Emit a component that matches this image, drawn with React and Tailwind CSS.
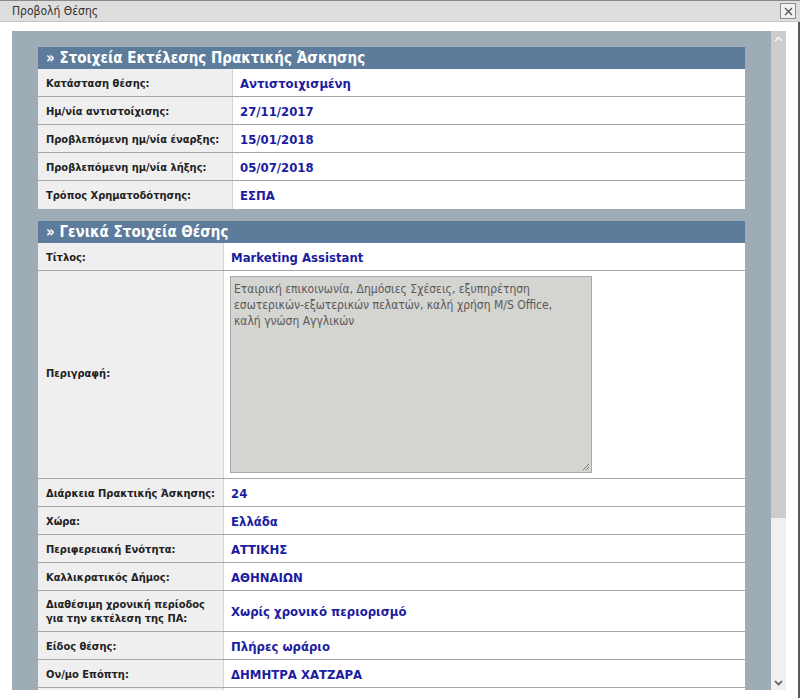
import React from 'react';

const FONT = "font-['DejaVu_Sans_Condensed','DejaVu_Sans',Tahoma,sans-serif]";

const firstRows = [
  ['Κατάσταση θέσης:', 'Αντιστοιχισμένη'],
  ['Ημ/νία αντιστοίχισης:', '27/11/2017'],
  ['Προβλεπόμενη ημ/νία έναρξης:', '15/01/2018'],
  ['Προβλεπόμενη ημ/νία λήξης:', '05/07/2018'],
  ['Τρόπος Χρηματοδότησης:', 'ΕΣΠΑ'],
];

const secondRows = [
  ['Διάρκεια Πρακτικής Άσκησης:', '24'],
  ['Χώρα:', 'Ελλάδα'],
  ['Περιφερειακή Ενότητα:', 'ΑΤΤΙΚΗΣ'],
  ['Καλλικρατικός Δήμος:', 'ΑΘΗΝΑΙΩΝ'],
];

const thirdRows = [
  ['Είδος θέσης:', 'Πλήρες ωράριο'],
  ['Ον/μο Επόπτη:', 'ΔΗΜΗΤΡΑ ΧΑΤΖΑΡΑ'],
  ['', ''],
];

const SectionHeader = ({ children }) => (
  <div className="h-[22px] bg-[#5d7b9b] flex items-center pl-[8px] text-white font-bold text-[15px] leading-none">
    » {children}
  </div>
);

const Row = ({ label, value, labelWidth, height = 'h-[28px]', last = false, children }) => (
  <div className={`flex ${height} bg-white ${last ? '' : 'border-b border-[#a8a8a8]'}`}>
    <div
      className={`${labelWidth} shrink-0 bg-[#efefef] border-r border-[#d4d4d4] flex items-center pl-[8px] pt-[2px] text-[11px] font-bold text-[#222] leading-[14px]`}
    >
      {label}
    </div>
    <div className="flex-1 flex items-center pl-[7px] pt-[2px] text-[13px] font-bold text-[#1c1ca0]">
      {children || value}
    </div>
  </div>
);

const Scrollbar = () => (
  <div className="w-[15px] h-full flex flex-col bg-[#f0f0f0]">
    <div className="h-[487px] bg-[#cdcdcd] flex justify-center pt-[5px]">
      <svg width="9" height="6" viewBox="0 0 9 6">
        <path d="M1 5 L4.5 1.5 L8 5" fill="none" stroke="#f4f4f4" strokeWidth="1.6" />
      </svg>
    </div>
    <div className="flex-1 flex flex-col justify-end items-center pb-[4px]">
      <svg width="9" height="6" viewBox="0 0 9 6">
        <path d="M1 1 L4.5 4.5 L8 1" fill="none" stroke="#555" strokeWidth="1.6" />
      </svg>
    </div>
  </div>
);

export default function App() {
  return (
    <div className={`w-[800px] h-[698px] bg-white flex flex-col overflow-hidden ${FONT}`}>
      {/* Title bar */}
      <div className="h-[22px] shrink-0 bg-[#dedede] border-t border-[#8a8a8a] border-b border-b-[#c4c4c4] flex items-center justify-between pl-[12px] pr-[4px]">
        <span className="text-[12px] text-[#333] font-normal">Προβολή Θέσης</span>
        <div className="w-[16px] h-[16px] border border-[#8c8c8c] bg-[#f2f2f2] flex items-center justify-center">
          <svg width="9" height="9" viewBox="0 0 9 9">
            <path d="M1 1 L8 8 M8 1 L1 8" stroke="#555" strokeWidth="1.3" />
          </svg>
        </div>
      </div>

      {/* Content */}
      <div className="flex-1 flex pt-[9px] pl-[12px] border-r-2 border-[#5a5a5a]">
        <div className="h-[659px] flex">
          <div className="w-[759px] h-full bg-[#9eacb5] overflow-hidden px-[26px] pt-[16px]">
            <SectionHeader>Στοιχεία Εκτέλεσης Πρακτικής Άσκησης</SectionHeader>
            {firstRows.map(([l, v], i) => (
              <Row key={l} label={l} value={v} labelWidth="w-[195px]" last={i === firstRows.length - 1} />
            ))}

            <div className="h-[12px]" />

            <SectionHeader>Γενικά Στοιχεία Θέσης</SectionHeader>
            <Row label="Τίτλος:" value="Marketing Assistant" labelWidth="w-[186px]" />
            <div className="flex h-[208px] bg-white border-b border-[#a8a8a8]">
              <div className="w-[186px] shrink-0 bg-[#efefef] border-r border-[#d4d4d4] flex items-center pl-[8px] text-[11px] font-bold text-[#222]">
                Περιγραφή:
              </div>
              <div className="flex-1 pl-[6px] pt-[5px]">
                <div className="relative w-[362px] h-[197px] bg-[#d4d4d0] border border-[#a9a9a9] pl-[3px] pr-[16px] pt-[4px] text-[12px] leading-[16px] text-[#5a5a5a]">
                  Εταιρική επικοινωνία, Δημόσιες Σχέσεις, εξυπηρέτηση εσωτερικών-εξωτερικών πελατών, καλή χρήση M/S Office, καλή γνώση Αγγλικών
                  <svg className="absolute right-[1px] bottom-[1px]" width="8" height="8" viewBox="0 0 8 8">
                    <path d="M7 1 L1 7 M7 4 L4 7" stroke="#777" strokeWidth="1" />
                  </svg>
                </div>
              </div>
            </div>
            {secondRows.map(([l, v]) => (
              <Row key={l} label={l} value={v} labelWidth="w-[186px]" />
            ))}
            <Row
              label={<span>Διαθέσιμη χρονική περίοδος<br />για την εκτέλεση της ΠΑ:</span>}
              value="Χωρίς χρονικό περιορισμό"
              labelWidth="w-[186px]"
              height="h-[41px]"
            />
            {thirdRows.map(([l, v], i) => (
              <Row key={i} label={l} value={v} labelWidth="w-[186px]" />
            ))}
          </div>
          <Scrollbar />
        </div>
      </div>
    </div>
  );
}
